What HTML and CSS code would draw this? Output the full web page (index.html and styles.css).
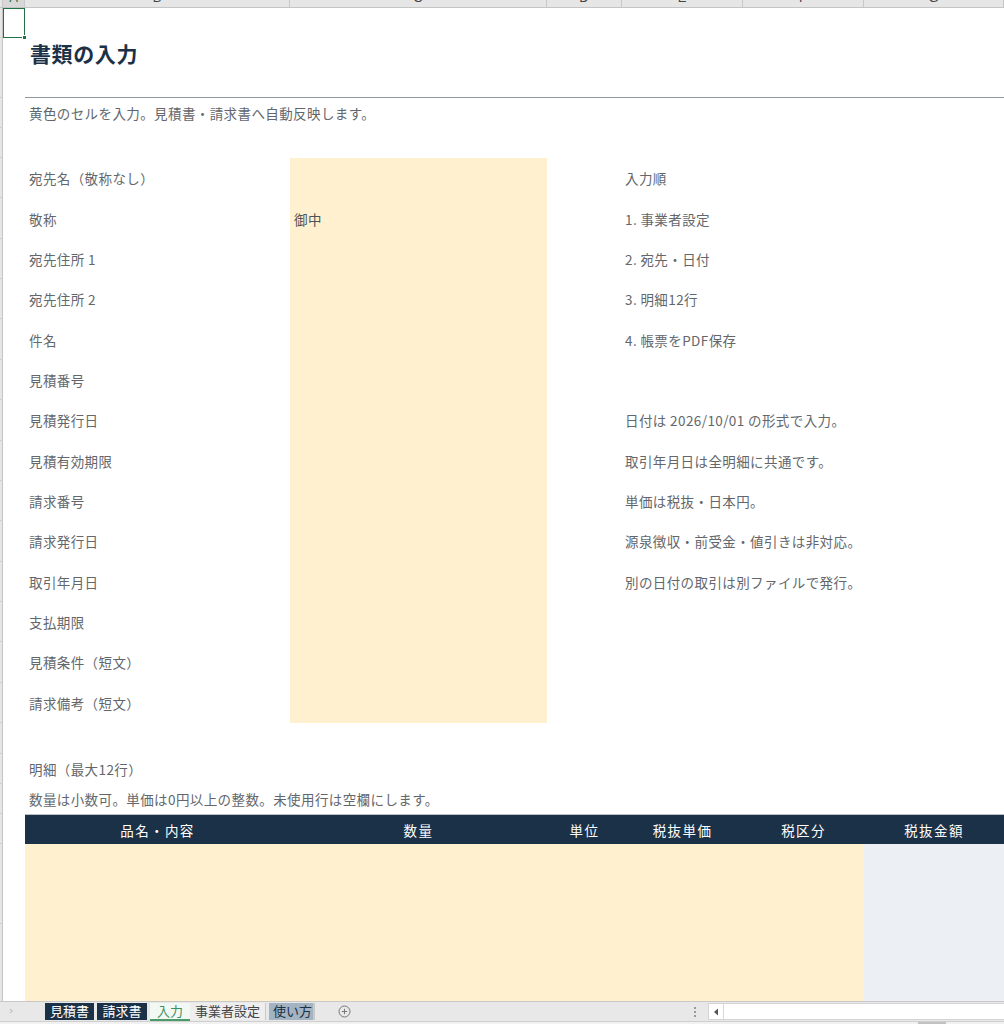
FILE: index.html
```html
<!DOCTYPE html>
<html lang="ja">
<head>
<meta charset="utf-8">
<title>書類の入力</title>
<link rel="stylesheet" href="styles.css">
</head>
<body>
<div class="app">
  <div class="colhead">
    <div class="ch corner"></div>
    <div class="ch sel">A</div>
    <div class="ch">B</div>
    <div class="ch">C</div>
    <div class="ch">D</div>
    <div class="ch">E</div>
    <div class="ch">F</div>
    <div class="ch">G</div>
  </div>

  <div class="sheet">
    <div class="row r30"><div class="rh"></div><div class="selcell"><span class="handle"></span></div></div>
    <div class="row r30"><div class="rh"></div><div class="spacer"></div><div class="span-rest title">書類の入力</div></div>
    <div class="row r30"><div class="rh"></div><div class="spacer"></div><div class="span-rest rule"></div></div>
    <div class="row r30"><div class="rh"></div><div class="spacer"></div><div class="span-rest text">黄色のセルを入力。見積書・請求書へ自動反映します。</div></div>
    <div class="row r30"><div class="rh"></div></div>

    <div class="row r40"><div class="rh"></div><div class="spacer"></div><div class="cb text">宛先名（敬称なし）</div><div class="cc input"></div><div class="cd"></div><div class="ce text">入力順</div></div>
    <div class="row r40"><div class="rh"></div><div class="spacer"></div><div class="cb text">敬称</div><div class="cc input text">御中</div><div class="cd"></div><div class="ce text">1. 事業者設定</div></div>
    <div class="row r40"><div class="rh"></div><div class="spacer"></div><div class="cb text">宛先住所 1</div><div class="cc input"></div><div class="cd"></div><div class="ce text">2. 宛先・日付</div></div>
    <div class="row r40"><div class="rh"></div><div class="spacer"></div><div class="cb text">宛先住所 2</div><div class="cc input"></div><div class="cd"></div><div class="ce text">3. 明細12行</div></div>
    <div class="row r40"><div class="rh"></div><div class="spacer"></div><div class="cb text">件名</div><div class="cc input"></div><div class="cd"></div><div class="ce text">4. 帳票をPDF保存</div></div>
    <div class="row r40"><div class="rh"></div><div class="spacer"></div><div class="cb text">見積番号</div><div class="cc input"></div><div class="cd"></div><div class="ce text"></div></div>
    <div class="row r40"><div class="rh"></div><div class="spacer"></div><div class="cb text">見積発行日</div><div class="cc input"></div><div class="cd"></div><div class="ce text">日付は 2026/10/01 の形式で入力。</div></div>
    <div class="row r40"><div class="rh"></div><div class="spacer"></div><div class="cb text">見積有効期限</div><div class="cc input"></div><div class="cd"></div><div class="ce text">取引年月日は全明細に共通です。</div></div>
    <div class="row r40"><div class="rh"></div><div class="spacer"></div><div class="cb text">請求番号</div><div class="cc input"></div><div class="cd"></div><div class="ce text">単価は税抜・日本円。</div></div>
    <div class="row r40"><div class="rh"></div><div class="spacer"></div><div class="cb text">請求発行日</div><div class="cc input"></div><div class="cd"></div><div class="ce text">源泉徴収・前受金・値引きは非対応。</div></div>
    <div class="row r40"><div class="rh"></div><div class="spacer"></div><div class="cb text">取引年月日</div><div class="cc input"></div><div class="cd"></div><div class="ce text">別の日付の取引は別ファイルで発行。</div></div>
    <div class="row r40"><div class="rh"></div><div class="spacer"></div><div class="cb text">支払期限</div><div class="cc input"></div></div>
    <div class="row r40"><div class="rh"></div><div class="spacer"></div><div class="cb text">見積条件（短文）</div><div class="cc input"></div></div>
    <div class="row r40"><div class="rh"></div><div class="spacer"></div><div class="cb text">請求備考（短文）</div><div class="cc input"></div></div>

    <div class="row r31"><div class="rh"></div></div>
    <div class="row r30"><div class="rh"></div><div class="spacer"></div><div class="span-rest text">明細（最大12行）</div></div>
    <div class="row r30"><div class="rh"></div><div class="spacer"></div><div class="span-rest text">数量は小数可。単価は0円以上の整数。未使用行は空欄にします。</div></div>
    <div class="row thead"><div class="rh"></div><div class="spacer"></div>
      <div class="th">品名・内容</div><div class="th">数量</div><div class="th">単位</div><div class="th">税抜単価</div><div class="th">税区分</div><div class="th">税抜金額</div>
    </div>
    <div class="row rdata"><div class="rh"></div><div class="spacer"></div><div class="dinput"></div><div class="dcalc"></div></div>
    <div class="row rdata"><div class="rh"></div><div class="spacer"></div><div class="dinput"></div><div class="dcalc"></div></div>
  </div>

  <div class="tabbar">
    <div class="tabnav">›</div>
    <div class="tab dark">見積書</div>
    <div class="tab dark">請求書</div>
    <div class="tab active">入力</div>
    <div class="tab plain">事業者設定</div>
    <div class="tab muted">使い方</div>
    <div class="addtab">
      <svg width="13" height="13" viewBox="0 0 13 13"><circle cx="6.5" cy="6.5" r="5.5" fill="none" stroke="#777" stroke-width="1"/><path d="M6.5 3.8v5.4M3.8 6.5h5.4" stroke="#777" stroke-width="1"/></svg>
    </div>
    <div class="tabfill"></div>
    <div class="grip"><span></span><span></span><span></span></div>
    <div class="hscroll">
      <div class="arrow">
        <svg width="6" height="8" viewBox="0 0 6 8"><path d="M5 0.5 L1 4 L5 7.5 Z" fill="#555"/></svg>
      </div>
      <div class="track"></div>
    </div>
  </div>
  <div class="statusbar"><span class="thumb"></span></div>
</div>
</body>
</html>
```

FILE: styles.css
```css
* { box-sizing: border-box; }
html, body { margin: 0; padding: 0; }
body {
  width: 1004px;
  height: 1024px;
  overflow: hidden;
  background: #ffffff;
  font-family: "Noto Sans CJK JP", "Noto Sans", sans-serif;
  color: #555a60;
}
.app {
  width: 1004px;
  height: 1024px;
  display: flex;
  flex-direction: column;
}

/* column header strip */
.colhead {
  height: 8px;
  flex: none;
  display: grid;
  grid-template-columns: 3px 22px 265px 257px 75px 121px 121px 140px;
  background: #e6e6e6;
  border-bottom: 1px solid #c4c4c4;
  overflow: hidden;
}
.ch {
  border-right: 1px solid #c8c8c8;
  font-family: "Liberation Sans", Arial, sans-serif;
  font-size: 13px;
  line-height: 13px;
  color: #444;
  text-align: center;
  margin-top: -9px;
  height: 17px;
}
.ch.corner { background: #e6e6e6; }
.ch.sel { background: #d8d8d8; color: #1e6b3e; }

/* sheet */
.sheet {
  flex: 1;
  min-height: 0;
  overflow: hidden;
  border-bottom: 1px solid #c8c8c8;
}
.row {
  display: grid;
  grid-template-columns: 3px 22px 265px 257px 75px 121px 121px 140px;
}
.r30 { height: 30px; }
.r31 { height: 31px; }
.r40 { height: 40.36px; }
.rh {
  background: #e6e6e6;
  border-bottom: 1px solid #cfcfcf;
  border-right: 1px solid #c4c4c4;
}
.selcell {
  position: relative;
  border: 1.5px solid #217346;
}
.handle {
  position: absolute;
  right: -3px;
  bottom: -3px;
  width: 5px;
  height: 5px;
  background: #217346;
  border: 1px solid #fff;
}
.span-rest {
  grid-column: 3 / 9;
}
.title {
  padding-left: 5px;
  font-size: 21px;
  font-weight: 700;
  color: #1b3147;
  letter-spacing: 0.6px;
  display: flex;
  align-items: center;
  padding-bottom: 5px;
}
.rule {
  border-bottom: 1px solid #8d98a3;
}
.text {
  display: flex;
  align-items: center;
  padding-left: 4px;
  font-size: 13.5px;
  color: #63676c;
  white-space: nowrap;
  letter-spacing: 0.4px;
}
.cb { grid-column: 3; }
.cc { grid-column: 4; }
.cd { grid-column: 5; }
.ce { grid-column: 6 / 9; padding-left: 3px; }
.input { background: #fff1cf; }
.cc.text { color: #4f5358; }

/* table header */
.thead {
  height: 30px;
}
.th {
  background: #1b3147;
  border-top: 1px solid #b8c0c8;
  color: #ffffff;
  font-size: 13.5px;
  font-weight: 400;
  letter-spacing: 1.4px;
  display: flex;
  align-items: center;
  justify-content: center;
}
.rdata { height: 80px; }
.dinput { grid-column: 3 / 8; background: #fff1cf; }
.dcalc { grid-column: 8; background: #ecf0f4; }

/* tab bar */
.tabbar {
  height: 20px;
  flex: none;
  display: flex;
  align-items: flex-start;
  background: #e8e8e8;
  border-bottom: 1px solid #cfcfcf;
  font-size: 13px;
  line-height: 16px;
}
.tabnav {
  width: 45px;
  color: #b0b0b0;
  font-family: "DejaVu Sans", sans-serif;
  font-size: 11px;
  padding-left: 9px;
  padding-top: 1px;
}
.tab {
  height: 17px;
  margin-top: 1px;
  padding: 0 4px;
  white-space: nowrap;
}
.tab.dark {
  background: #1b3147;
  color: #ffffff;
  margin-right: 3px;
  width: 49px;
  text-align: center;
}
.tab.dark + .tab.dark { width: 50px; }
.tab.active {
  background: #f2f8f4;
  color: #3d8f5c;
  border-bottom: 2px solid #4c9a69;
  width: 40px;
  text-align: center;
  height: 18px;
}
.tab.plain {
  background: #eeeeee;
  color: #444;
  width: 76px;
  text-align: center;
  border-right: 1px solid #c9c9c9;
}
.tab.muted {
  background: #a3b3c1;
  color: #1b3147;
  margin-left: 3px;
  width: 46px;
  text-align: center;
  border-right: 2px solid #c9c9c9;
}
.addtab {
  margin-left: 23px;
  margin-top: 3px;
  width: 13px;
  height: 13px;
}
.tabfill { flex: 1; }
.grip {
  width: 4px;
  display: flex;
  flex-direction: column;
  gap: 2px;
  padding-top: 5px;
  margin-right: 10px;
}
.grip span {
  width: 2px;
  height: 2px;
  background: #9a9a9a;
  display: block;
}
.hscroll {
  width: 296px;
  height: 17px;
  margin-top: 1px;
  display: flex;
  border: 1px solid #d4d4d4;
  border-right: none;
  background: #ffffff;
}
.arrow {
  width: 15px;
  display: flex;
  align-items: center;
  justify-content: center;
  border-right: 1px solid #d8d8d8;
}
.track { flex: 1; }
.statusbar {
  height: 2px;
  flex: none;
  background: #f1f1f1;
  position: relative;
}
.thumb {
  position: absolute;
  left: 918px;
  top: 0;
  width: 28px;
  height: 2px;
  background: #c2c2c2;
}
```
